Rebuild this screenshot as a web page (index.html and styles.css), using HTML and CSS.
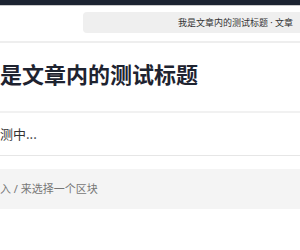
FILE: index.html
```html
<!DOCTYPE html>
<html>
<head>
  <title>文章</title>
  <link rel="stylesheet" href="styles.css">
</head>
<body>
  <div class="topbar"></div>

  <!-- breadcrumb -->
  <div class="crumbs">
    <div class="crumb-pill">我是文章内的测试标题 · 文章</div>
  </div>

  <div class="doc">
    <h1 class="doc-title">我是文章内的测试标题</h1>
    <div class="doc-block">检测中...</div>
    <div class="slash-hint">输入 / 来选择一个区块</div>
  </div>
</body>
</html>
```

FILE: styles.css
```css
body { margin: 0; font-family: "Noto Sans CJK SC", "Noto Sans", sans-serif; background: #fff; overflow: hidden; }
.topbar { height: 5px; background: #1c2331; border-bottom: 1px solid #c9c9c9; }
.crumbs { height: 37px; padding: 6px 0 0 83px; box-sizing: border-box; border-bottom: 2px solid #eeeeee; display: flex; align-items: flex-start; }
.crumb-pill {
  flex: 1; height: 21px; line-height: 21px; background: #efefef; border-radius: 4px 0 0 4px;
  text-align: right; padding-right: 7px; font-size: 9px; color: #333; white-space: nowrap;
  font-family: "Noto Sans", "Noto Sans CJK SC", sans-serif;
}
.doc { margin-left: -25px; }
.doc-title {
  margin: 0; padding: 15px 0 23px 3px; font-size: 22px; line-height: 30px; font-weight: 700;
  color: #1e2330; border-bottom: 2px solid #f1f1f1; white-space: nowrap;
}
.doc-block { padding: 11px 0 11px 12px; font-size: 13px; line-height: 20px; color: #333; border-bottom: 1px solid #e6e6e6; }
.slash-hint {
  margin-top: 13px; padding-left: 14px; height: 40px; line-height: 40px; background: #f4f4f4;
  font-size: 11px; color: #777; font-family: "Noto Sans", "Noto Sans CJK SC", sans-serif;
}
```
